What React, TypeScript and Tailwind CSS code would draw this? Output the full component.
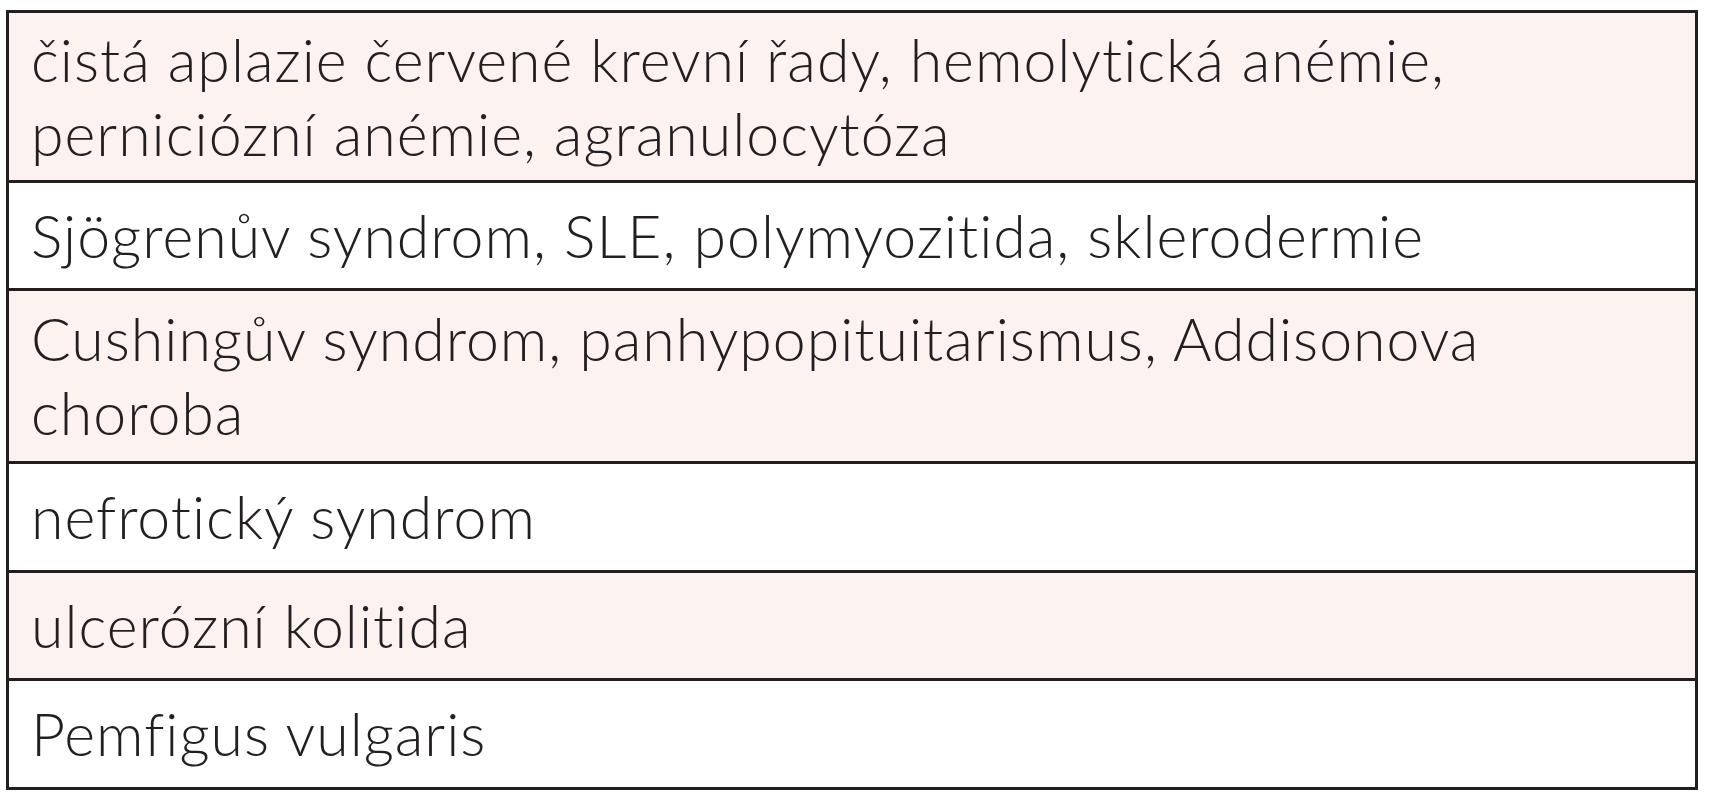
const rows = [
    {text: 'čistá aplazie červené krevní řady, hemolytická anémie, perniciózní anémie, agranulocytóza', shaded: true, h: 'h-[167px]'},
    {text: 'Sjögrenův syndrom, SLE, polymyozitida, sklerodermie', shaded: false, h: 'h-[105px]'},
    {text: 'Cushingův syndrom, panhypopituitarismus, Addisonova choroba', shaded: true, h: 'h-[170px]'},
    {text: 'nefrotický syndrom', shaded: false, h: 'h-[106px]'},
    {text: 'ulcerózní kolitida', shaded: true, h: 'h-[105px]'},
    {text: 'Pemfigus vulgaris', shaded: false, h: 'h-[106px]'},
];

export default function App() {
    return (
        <div className="w-[1712px] h-[800px] bg-white pt-[10px] pl-[6px]">
            <div className="w-[1692px] border-[3px] border-b-0 border-[#231f20] font-['Lato',sans-serif] font-light text-[#231f20]">
                {rows.map((row, i) => (
                    <div key={i}
                         className={(row.shaded ? 'bg-[#fcf2ef] ' : 'bg-white ') + row.h + ' box-content flex items-center border-b-[3px] border-[#231f20] pl-[22px] pr-[40px] text-[59px] leading-[74px] tracking-[1px]'}>
                        <span>{row.text}</span>
                    </div>
                ))}
            </div>
        </div>
    );
}
